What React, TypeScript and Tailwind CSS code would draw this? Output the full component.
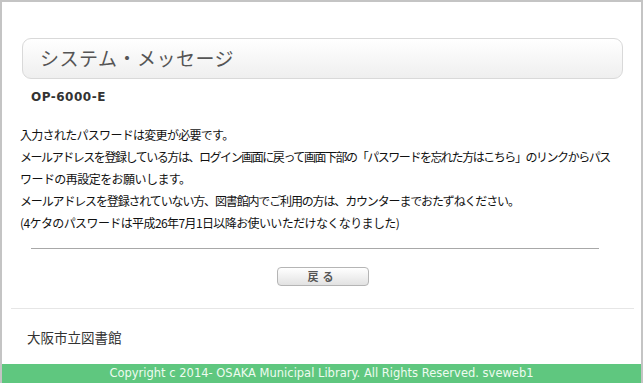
import React from 'react';

const JP = "font-['Noto_Sans_CJK_JP','Noto_Sans',sans-serif]";

// tracking per line keeps each line the length it has in the Meiryo original
const MESSAGE_LINES = [
  { text: '入力されたパスワードは変更が必要です。', cls: 'tracking-[-0.7px]' },
  {
    text: 'メールアドレスを登録している方は、ログイン画面に戻って画面下部の「パスワードを忘れた方はこちら」のリンクからパス',
    cls: 'tracking-[-1.45px]',
  },
  { text: 'ワードの再設定をお願いします。', cls: 'tracking-[-0.55px]' },
  { text: 'メールアドレスを登録されていない方、図書館内でご利用の方は、カウンターまでおたずねください。', cls: 'tracking-[-1.15px]' },
  { text: '(4ケタのパスワードは平成26年7月1日以降お使いいただけなくなりました)', cls: 'tracking-[-0.6px]' },
];

export default function App() {
  return (
    <div className="relative w-[643px] h-[383px] overflow-hidden bg-white border-t-2 border-x-2 border-[#c4c4c4] flex flex-col">
      {/* little orange tick on the left edge */}
      <div className="absolute -left-[2px] top-[120px] w-[2px] h-[19px] bg-[#e3a33a]" />

      <div className="pt-[36px] pl-[20px] pr-[18px]">
        <div className="h-[41px] rounded-[9px] border border-[#d9d9d9] bg-gradient-to-b from-white to-[#efefef] flex items-center pl-[17px]">
          <h1 className={`${JP} text-[19px] text-[#555] tracking-[0.5px]`}>システム・メッセージ</h1>
        </div>
      </div>

      <p className="mt-[9px] pl-[29px] font-['DejaVu_Sans',sans-serif] font-bold text-[12px] tracking-[0.5px] text-[#333]">OP-6000-E</p>

      <div className={`${JP} mt-[18px] pl-[18px] text-[12px] leading-[22px] text-[#111]`}>
        {MESSAGE_LINES.map((line) => (
          <p key={line.text} className={`whitespace-nowrap ${line.cls}`}>
            {line.text}
          </p>
        ))}
      </div>

      <div className="mt-[14px] ml-[29px] mr-[42px] h-px bg-[#a8a8a8]" />

      <div className="mt-[18px] flex justify-center pl-[2px]">
        <button className={`${JP} w-[92px] h-[19px] rounded-[4px] border border-[#b5b5b5] bg-gradient-to-b from-white to-[#e2e2e2] text-[11px] font-bold text-[#555] tracking-[4px] leading-none`}>
          戻る
        </button>
      </div>

      <div className="mt-[22px] ml-[9px] mr-[7px] h-px bg-[#e6e6e6]" />

      <p className={`${JP} mt-[18px] pl-[25px] text-[13.5px] text-[#333]`}>大阪市立図書館</p>

      <footer className="mt-auto h-[19px] bg-[#5fc77f] flex items-center justify-center font-['DejaVu_Sans',sans-serif] text-[11.5px] text-[#eefbf0]">
        Copyright c 2014- OSAKA Municipal Library. All Rights Reserved. sveweb1
      </footer>
    </div>
  );
}
